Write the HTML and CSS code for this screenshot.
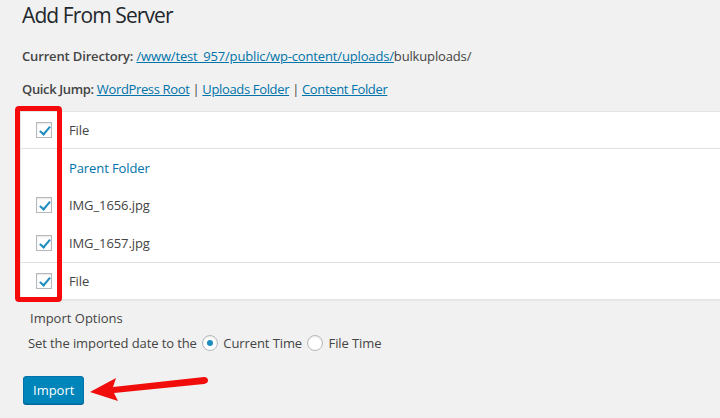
FILE: index.html
```html
<!DOCTYPE html>
<html>
<head>
<meta charset="utf-8">
<link rel="stylesheet" href="styles.css">
</head>
<body>
<div class="wrap">
  <h1 class="title">Add From Server</h1>
  <p class="line"><strong>Current Directory:</strong> <a href="#">/www/test_957/public/wp-content/uploads/</a>bulkuploads/</p>
  <p class="line jump"><strong>Quick Jump:</strong> <a href="#">WordPress Root</a> | <a href="#">Uploads Folder</a> | <a href="#">Content Folder</a></p>

  <div class="table">
    <div class="row head"><span class="cb checked"></span><span class="name">File</span></div>
    <div class="body">
      <div class="row"><span class="cb none"></span><a class="name link" href="#">Parent Folder</a></div>
      <div class="row"><span class="cb checked"></span><span class="name">IMG_1656.jpg</span></div>
      <div class="row"><span class="cb checked"></span><span class="name">IMG_1657.jpg</span></div>
    </div>
    <div class="row foot"><span class="cb checked"></span><span class="name">File</span></div>
  </div>

  <div class="options">
    <div class="opt-title">Import Options</div>
    <div class="opt-line">Set the imported date to the <span class="radio on"></span> Current Time <span class="radio"></span> File Time</div>
  </div>

  <button class="btn">Import</button>
</div>

<div class="highlight"></div>
<svg class="arrow" width="130" height="40" viewBox="0 0 130 40">
  <path d="M4 27 L30 13 L27 22 L118 12 Q122 12 122 15.5 Q122 18 118 19 L28 28 L32 36 Z" fill="#f20d0d"/>
</svg>
</body>
</html>
```

FILE: styles.css
```css
html, body {
  margin: 0;
  padding: 0;
  background: #f1f1f1;
  width: 720px;
  height: 418px;
  overflow: hidden;
  font-family: "Open Sans", "Noto Sans", sans-serif;
  font-size: 13px;
  color: #444;
}
.wrap {
  padding-left: 20px;
}
.title {
  margin: 0;
  padding: 0 0 0 2px;
  font-size: 21px;
  font-weight: 400;
  letter-spacing: -0.9px;
  line-height: 30px;
  color: #23282d;
}
.line {
  margin: 0;
  padding-left: 2px;
  line-height: 20px;
  margin-top: 16px;
  letter-spacing: -0.15px;
}
.line.jump {
  margin-top: 13px;
  letter-spacing: -0.35px;
}
.line strong {
  font-weight: 600;
}
a {
  color: #0073aa;
}
.table {
  margin-top: 12px;
  background: #fff;
  border: 1px solid #e5e5e5;
  border-right: none;
  box-shadow: 0 1px 1px rgba(0,0,0,0.04);
}
.row {
  display: flex;
  align-items: center;
  height: 37px;
}
.row.head {
  height: 36px;
  border-bottom: 1px solid #e1e1e1;
}
.row.foot {
  height: 36px;
  border-top: 1px solid #e1e1e1;
}
.body .row {
  height: 37.5px;
}
.cb {
  width: 16px;
  height: 16px;
  box-sizing: border-box;
  margin-left: 15px;
  margin-right: 17px;
  border: 1px solid #b4b9be;
  background: #fff;
  box-shadow: inset 0 1px 2px rgba(0,0,0,0.1);
  position: relative;
}
.cb.none {
  border: none;
  box-shadow: none;
  background: transparent;
}
.cb.checked::after {
  content: "";
  position: absolute;
  left: 5px;
  top: 1px;
  width: 4px;
  height: 9px;
  border-right: 2.5px solid #1e8cbe;
  border-bottom: 2.5px solid #1e8cbe;
  transform: rotate(40deg);
}
.name {
  color: #444;
  letter-spacing: -0.1px;
}
.link {
  text-decoration: none;
  color: #0073aa;
}
.options {
  padding-top: 9px;
}
.opt-title {
  padding-left: 10px;
  line-height: 18px;
  color: #444;
}
.opt-line {
  margin-top: 6px;
  padding-left: 8px;
  line-height: 20px;
  display: flex;
  align-items: center;
  white-space: pre;
  letter-spacing: -0.1px;
}
.radio {
  display: inline-block;
  width: 16px;
  height: 16px;
  box-sizing: border-box;
  border: 1px solid #b4b9be;
  border-radius: 50%;
  background: #fff;
  box-shadow: inset 0 1px 2px rgba(0,0,0,0.1);
  position: relative;
  margin: 0 2px 0 2px;
}
.radio.on::after {
  content: "";
  position: absolute;
  left: 4px;
  top: 4px;
  width: 6px;
  height: 6px;
  border-radius: 50%;
  background: #1e8cbe;
}
.btn {
  margin-top: 23px;
  margin-left: 3px;
  height: 28px;
  padding: 0 9px;
  background: #0085ba;
  border: 1px solid #0073aa;
  border-radius: 3px;
  box-shadow: 0 1px 0 #006799;
  color: #fff;
  font-family: "Open Sans", "Noto Sans", sans-serif;
  font-size: 13px;
  line-height: 26px;
}
.highlight {
  position: absolute;
  left: 15px;
  top: 106px;
  width: 37px;
  height: 186px;
  border: 5px solid #f50b0b;
  border-radius: 4px;
}
.arrow {
  position: absolute;
  left: 86px;
  top: 365px;
}
```
